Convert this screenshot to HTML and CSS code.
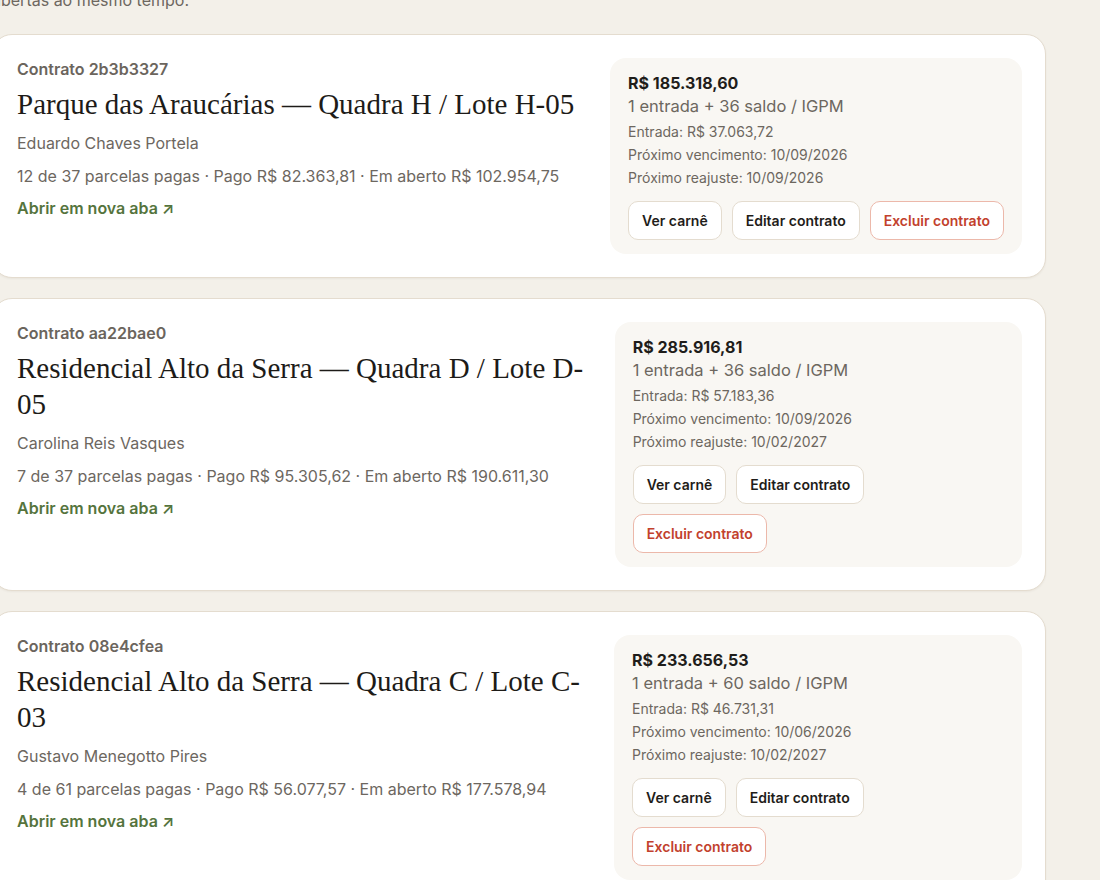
FILE: index.html
```html
<!DOCTYPE html>
<html lang="pt-BR">
<head>
<meta charset="utf-8">
<title>Contratos</title>
<link rel="stylesheet" href="styles.css">
</head>
<body>
<main class="page">
  <p class="intro">Cada contrato abre em uma nova aba, assim várias fichas podem ficar<br>abertas ao mesmo tempo.</p>
  <ul class="contracts">
    <li class="card">
      <div class="card-main">
        <div class="contract-id">Contrato 2b3b3327</div>
        <h2 class="lot">Parque das Araucárias — Quadra H / Lote H-05</h2>
        <p class="buyer">Eduardo Chaves Portela</p>
        <p class="progress">12 de 37 parcelas pagas · Pago R$ 82.363,81 · Em aberto R$ 102.954,75</p>
        <a class="open-link" href="#">Abrir em nova aba ↗</a>
      </div>
      <aside class="card-side">
        <div class="total">R$ 185.318,60</div>
        <div class="plan">1 entrada + 36 saldo / IGPM</div>
        <div class="detail">Entrada: R$ 37.063,72</div>
        <div class="detail">Próximo vencimento: 10/09/2026</div>
        <div class="detail">Próximo reajuste: 10/09/2026</div>
        <div class="actions">
          <button class="btn">Ver carnê</button>
          <button class="btn">Editar contrato</button>
          <button class="btn btn-danger">Excluir contrato</button>
        </div>
      </aside>
    </li>
    <li class="card">
      <div class="card-main">
        <div class="contract-id">Contrato aa22bae0</div>
        <h2 class="lot">Residencial Alto da Serra — Quadra D / Lote D-05</h2>
        <p class="buyer">Carolina Reis Vasques</p>
        <p class="progress">7 de 37 parcelas pagas · Pago R$ 95.305,62 · Em aberto R$ 190.611,30</p>
        <a class="open-link" href="#">Abrir em nova aba ↗</a>
      </div>
      <aside class="card-side">
        <div class="total">R$ 285.916,81</div>
        <div class="plan">1 entrada + 36 saldo / IGPM</div>
        <div class="detail">Entrada: R$ 57.183,36</div>
        <div class="detail">Próximo vencimento: 10/09/2026</div>
        <div class="detail">Próximo reajuste: 10/02/2027</div>
        <div class="actions">
          <button class="btn">Ver carnê</button>
          <button class="btn">Editar contrato</button>
          <button class="btn btn-danger">Excluir contrato</button>
        </div>
      </aside>
    </li>
    <li class="card">
      <div class="card-main">
        <div class="contract-id">Contrato 08e4cfea</div>
        <h2 class="lot">Residencial Alto da Serra — Quadra C / Lote C-03</h2>
        <p class="buyer">Gustavo Menegotto Pires</p>
        <p class="progress">4 de 61 parcelas pagas · Pago R$ 56.077,57 · Em aberto R$ 177.578,94</p>
        <a class="open-link" href="#">Abrir em nova aba ↗</a>
      </div>
      <aside class="card-side">
        <div class="total">R$ 233.656,53</div>
        <div class="plan">1 entrada + 60 saldo / IGPM</div>
        <div class="detail">Entrada: R$ 46.731,31</div>
        <div class="detail">Próximo vencimento: 10/06/2026</div>
        <div class="detail">Próximo reajuste: 10/02/2027</div>
        <div class="actions">
          <button class="btn">Ver carnê</button>
          <button class="btn">Editar contrato</button>
          <button class="btn btn-danger">Excluir contrato</button>
        </div>
      </aside>
    </li>
  </ul>
</main>
</body>
</html>
```

FILE: styles.css
```css
* { box-sizing: border-box; }

html, body {
  margin: 0;
  padding: 0;
  background: #f3f0e9;
  overflow: hidden;
}

body {
  font-family: "Inter", "Liberation Sans", sans-serif;
  color: #1f1d1a;
}

.page {
  width: 1054px;
  margin: -36px 0 0 -8px;
}

.intro {
  margin: 0 0 22px;
  font-size: 16px;
  line-height: 24px;
  color: #6d675f;
}

.contracts {
  list-style: none;
  margin: 0;
  padding: 0;
  display: flex;
  flex-direction: column;
  gap: 20px;
}

.card {
  display: flex;
  align-items: flex-start;
  gap: 24px;
  padding: 23px;
  background: #ffffff;
  border: 1px solid #e4dccf;
  border-radius: 20px;
  box-shadow: 0 1px 2px rgba(60, 45, 20, 0.05);
}

.card-main {
  flex: 1 3 auto;
  min-width: 0;
  padding-left: 1px;
}

.contract-id {
  font-size: 16px;
  line-height: 22px;
  font-weight: 600;
  color: #6b655d;
}

.lot {
  margin: 6px 0 0;
  font-family: "Liberation Serif", "DejaVu Serif", serif;
  font-weight: 400;
  font-size: 29px;
  line-height: 36px;
  color: #1d1b18;
}

.buyer,
.progress {
  margin: 9px 0 0;
  font-size: 16px;
  line-height: 24px;
  color: #6d675f;
}

.open-link {
  display: inline-block;
  margin-top: 8px;
  font-size: 16px;
  line-height: 24px;
  font-weight: 600;
  color: #55743d;
  text-decoration: none;
}

.card-side {
  flex: 0 1 auto;
  min-width: 0;
  padding: 14px 18px;
  background: #f9f7f3;
  border-radius: 16px;
}

.total {
  font-size: 16px;
  line-height: 22px;
  font-weight: 700;
  color: #1f1d1a;
}

.plan {
  font-size: 16.5px;
  line-height: 24px;
  color: #6d675f;
  margin-bottom: 2px;
}

.detail {
  font-size: 14px;
  line-height: 23px;
  color: #6d675f;
}

.actions {
  display: flex;
  flex-wrap: wrap;
  gap: 10px;
  margin-top: 12px;
}

.btn {
  height: 39px;
  padding: 0 13px;
  font-family: "Inter", "Liberation Sans", sans-serif;
  font-size: 14px;
  font-weight: 600;
  color: #1f1d1a;
  background: #ffffff;
  border: 1px solid #e4dccf;
  border-radius: 10px;
  white-space: nowrap;
}

.btn-danger {
  color: #c2412d;
  border-color: #ecb8aa;
}
```
